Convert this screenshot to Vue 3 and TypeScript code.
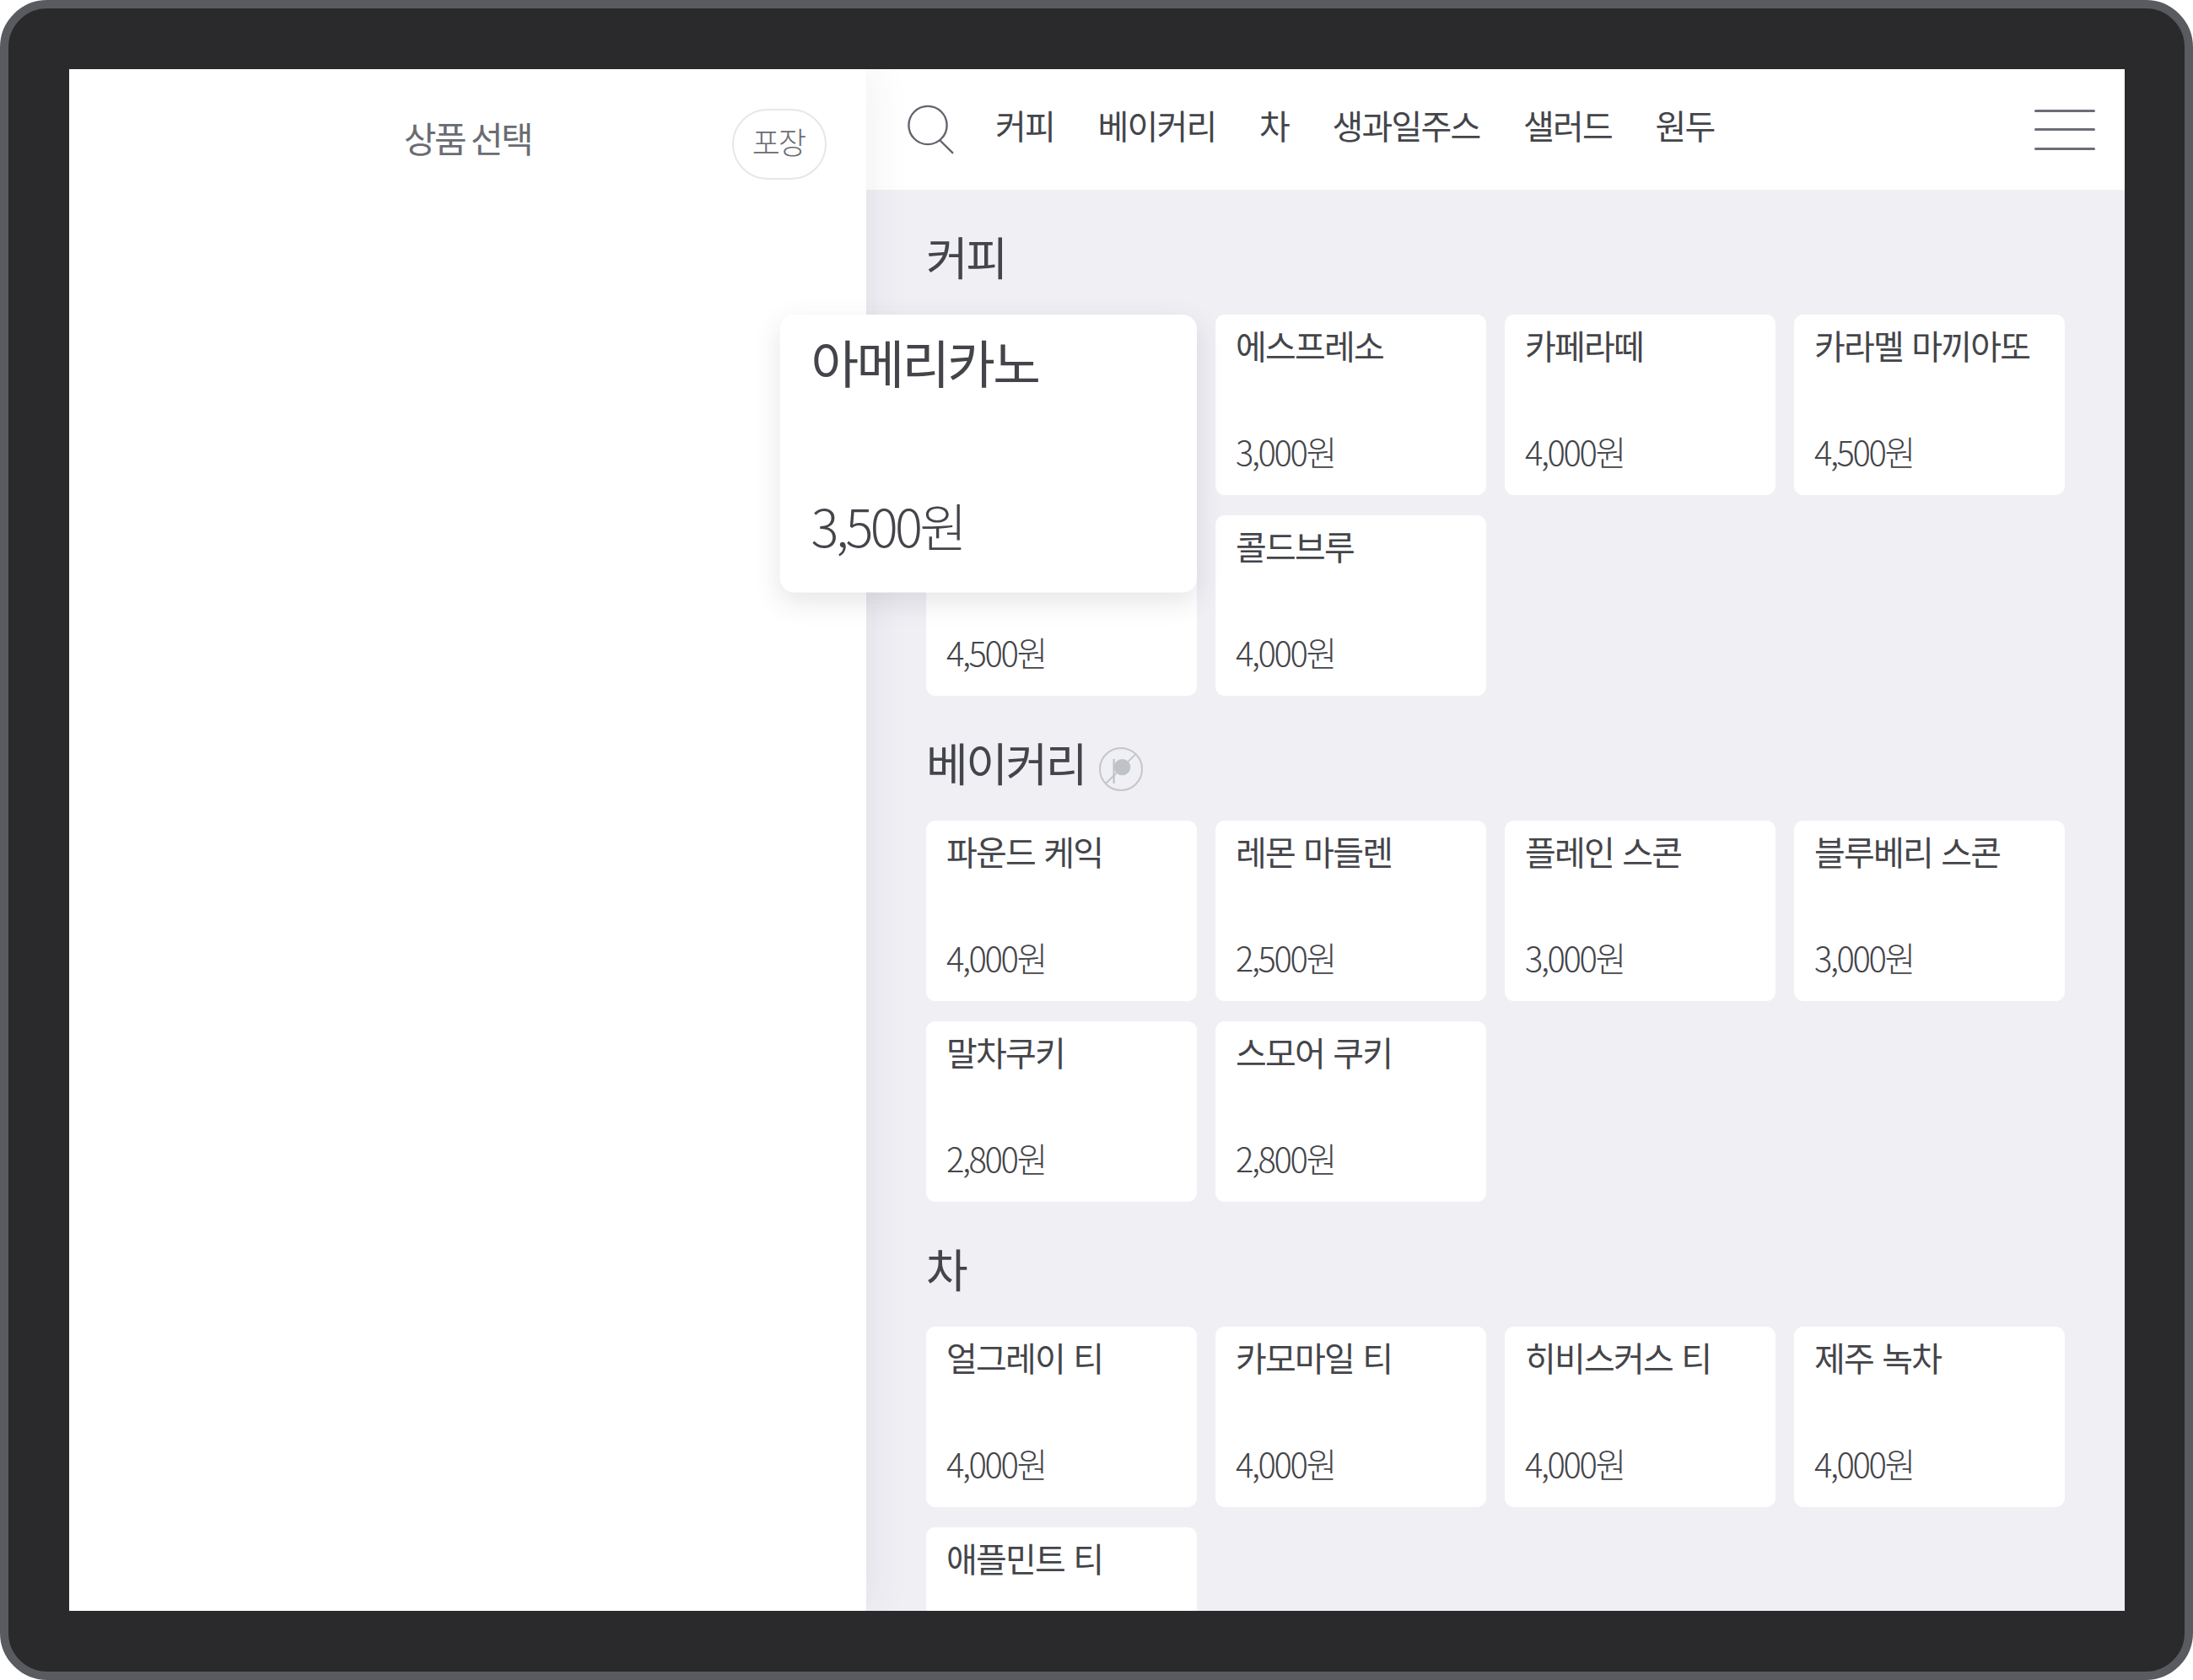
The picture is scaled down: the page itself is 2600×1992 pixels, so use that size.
<script setup lang="ts">
interface Item { name?: string; price?: string; focus?: boolean }
interface Section { title: string; off?: boolean; items: Item[] }
const nav: string[] = ['커피', '베이커리', '차', '생과일주스', '샐러드', '원두']
const sections: Section[] = [
  { title: '커피', items: [
    { name: '아메리카노', price: '3,500원', focus: true },
    { name: '에스프레소', price: '3,000원' },
    { name: '카페라떼', price: '4,000원' },
    { name: '카라멜 마끼아또', price: '4,500원' },
    { price: '4,500원' },
    { name: '콜드브루', price: '4,000원' },
  ] },
  { title: '베이커리', off: true, items: [
    { name: '파운드 케익', price: '4,000원' },
    { name: '레몬 마들렌', price: '2,500원' },
    { name: '플레인 스콘', price: '3,000원' },
    { name: '블루베리 스콘', price: '3,000원' },
    { name: '말차쿠키', price: '2,800원' },
    { name: '스모어 쿠키', price: '2,800원' },
  ] },
  { title: '차', items: [
    { name: '얼그레이 티', price: '4,000원' },
    { name: '카모마일 티', price: '4,000원' },
    { name: '히비스커스 티', price: '4,000원' },
    { name: '제주 녹차', price: '4,000원' },
    { name: '애플민트 티' },
  ] },
]
</script>

<template>
  <div class="device">
    <div class="screen">
      <aside class="cart">
        <header class="cart-head">
          <span></span>
          <h1 class="cart-title">상품 선택</h1>
          <button class="pack" type="button">포장</button>
        </header>
      </aside>
      <main class="menu">
        <header class="top">
          <svg class="search" width="58" height="60" viewBox="0 0 58 60" fill="none">
            <circle cx="25" cy="24.5" r="22.6" stroke="#62656c" stroke-width="2.4" />
            <path d="M40 43 L54.3 57.2" stroke="#62656c" stroke-width="2.4" stroke-linecap="round" />
          </svg>
          <nav class="tabs">
            <a v-for="n in nav" :key="n" class="tab">{{ n }}</a>
          </nav>
          <div class="burger"><i></i><i></i><i></i></div>
        </header>
        <div class="list">
          <section v-for="s in sections" :key="s.title" class="sec">
            <h2 class="sec-title">
              <span>{{ s.title }}</span>
              <svg v-if="s.off" class="off" width="54" height="54" viewBox="0 0 54 54" fill="none">
                <circle cx="27" cy="27" r="25" stroke="#c3c6ca" stroke-width="2" />
                <path d="M9 44 L44 9.6" stroke="#c3c6ca" stroke-width="2" />
                <path d="M18.6 15 V44" stroke="#bfc2c6" stroke-width="2.2" />
                <circle cx="28.6" cy="24.6" r="9.7" fill="#bfc2c6" />
              </svg>
            </h2>
            <div class="grid">
              <article v-for="(it, i) in s.items" :key="i" class="card" :class="{ focus: it.focus }">
                <div class="name">{{ it.name }}</div>
                <div v-if="it.price" class="price">{{ it.price }}</div>
              </article>
            </div>
          </section>
        </div>
      </main>
    </div>
  </div>
</template>

<style>
html, body { margin: 0; background: #fff; }
</style>

<style scoped>
* { box-sizing: border-box; }
.device {
  width: 2600px;
  height: 1992px;
  padding: 72px 71px 72px 72px;
  background: #2a2a2c;
  border: 10px solid #5a5b60;
  border-radius: 56px;
  font-family: "Noto Sans CJK KR", "Noto Sans", sans-serif;
  overflow: hidden;
}
.screen {
  display: flex;
  height: 100%;
  overflow: hidden;
  background: #fff;
}
.cart {
  position: relative;
  z-index: 1;
  flex: 0 0 945px;
  background: #fff;
  box-shadow: 0 0 50px rgba(60, 60, 80, 0.09);
}
.cart-head {
  display: grid;
  grid-template-columns: 1fr auto 1fr;
  align-items: center;
  height: 84px;
  margin-top: 47px;
}
.cart-title {
  margin: -17px 0 0;
  font-size: 42px;
  font-weight: 400;
  letter-spacing: -0.06em;
  color: #6a6c73;
}
.pack {
  justify-self: end;
  width: 112px;
  height: 84px;
  margin-right: 47px;
  padding: 0 2px 8px 0;
  background: #fff;
  border: 2px solid #e6e6ec;
  border-radius: 42px;
  font-family: inherit;
  font-size: 36px;
  font-weight: 300;
  letter-spacing: -0.05em;
  color: #6a6c73;
}
.menu {
  flex: 1;
  min-width: 0;
  background: #efeff4;
}
.top {
  display: flex;
  align-items: center;
  height: 143px;
  padding: 0 35px 0 48px;
  background: #fff;
}
.search { flex: none; margin-right: 47px; }
.tabs { display: flex; gap: 51.5px; flex: 1; margin-top: -12px; }
.tab {
  font-size: 40px;
  letter-spacing: -0.045em;
  color: #44454a;
  line-height: 60px;
}
.burger { display: flex; flex-direction: column; gap: 19.5px; width: 72px; }
.burger i { display: block; height: 3px; border-radius: 2px; background: #6b6e76; }
.list { padding: 44px 0 0 71px; }
.sec { margin-bottom: 44px; }
.sec-title {
  display: flex;
  align-items: center;
  gap: 15px;
  height: 72px;
  margin: 0 0 32px;
  font-size: 54px;
  font-weight: 400;
  letter-spacing: -0.045em;
  color: #44454a;
}
.sec-title span { margin-top: -3px; }
.off { margin-top: 14px; }
.grid {
  display: grid;
  grid-template-columns: repeat(4, 321px);
  grid-auto-rows: 214px;
  column-gap: 22px;
  row-gap: 24px;
}
.card {
  display: flex;
  flex-direction: column;
  justify-content: space-between;
  padding: 9px 24px 25px;
  background: #fff;
  border-radius: 11px;
  color: #44454a;
}
.focus {
  position: relative;
  z-index: 2;
  transform: scale(1.54);
  transform-origin: top right;
  box-shadow: 0 7px 20px rgba(60, 60, 80, 0.13);
}
.name {
  min-height: 54px;
  font-size: 40px;
  line-height: 54px;
  letter-spacing: -0.045em;
  word-spacing: 3px;
}
.price {
  font-size: 40px;
  line-height: 54px;
  font-weight: 300;
  letter-spacing: -0.06em;
}
</style>
